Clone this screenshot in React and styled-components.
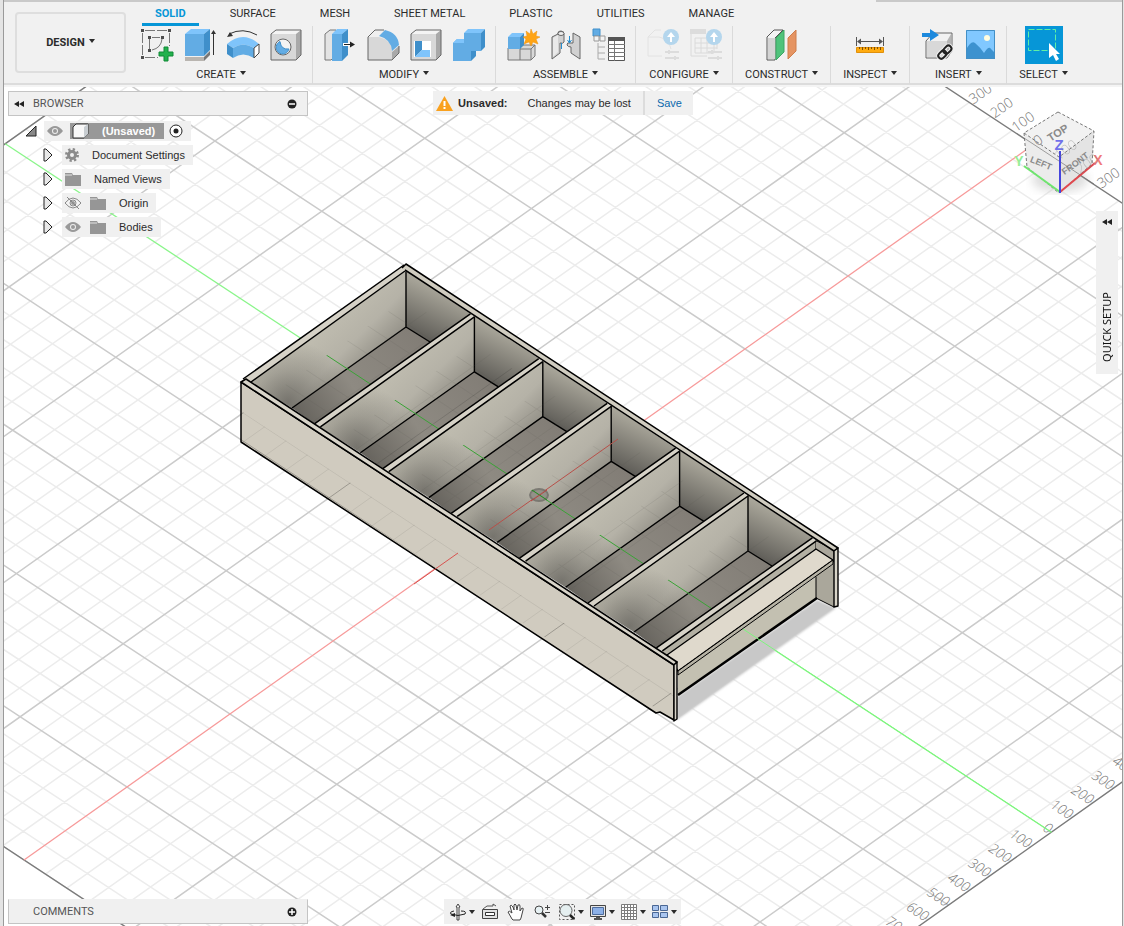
import React from "react";
import styled, { createGlobalStyle, css } from "styled-components";

const GlobalStyle = createGlobalStyle`
  * {
    box-sizing: border-box;
  }
  body {
    margin: 0;
    background: #f0f0f0;
    color: #2b2b2b;
    font-family: Roboto, "Liberation Sans", sans-serif;
    font-size: 11px;
  }
  button {
    font: inherit;
    color: inherit;
    background: none;
    border: 0;
    padding: 0;
    cursor: pointer;
  }
`;

const DARK = "#555";
const BLUE = "#62ace4";
const BLUE_TOP = "#7fc4fb";
const BLUE_SIDE = "#3f8fca";

/* ---------- toolbar icons, all on a 32 x 32 board ---------- */

const SketchIcon = () => (
  <>
    <path d="M4 1.500H26M1.500 4V26M28.500 4V17M4 28.500H17" stroke="#777" strokeDasharray="10 2" fill="none" />
    <path d="M8.500 10V20M11 8.500H19M21 10Q20 19 11 21" stroke="#777" fill="none" />
    <path d="M0 0h3v3h-3zM27 0h3v3h-3zM0 27h3v3h-3zM7 7h3v3h-3zM20 7h3v3h-3zM7 20h3v3h-3z" fill="#4d4d4d" />
    <path d="M23 18h4v5h5v4h-5v5h-4v-5h-5v-4h5z" fill="#23b14d" stroke="#118a36" />
  </>
);

const ExtrudeIcon = () => (
  <>
    <path d="M1 28H20V32H1z" fill="#b9b5b0" />
    <path d="M20 28L26 22V26L20 32z" fill="#777" />
    <path d="M1 5L7 0H26L20 5z" fill={BLUE_TOP} />
    <path d="M1 5H20V27H1z" fill={BLUE} />
    <path d="M20 5L26 0V21L20 27z" fill={BLUE_SIDE} />
    <path d="M29.500 3V26" stroke="#333" />
    <path d="M29.500 1l2.500 4h-5z" fill="#333" />
  </>
);

const RevolveIcon = () => (
  <>
    <path d="M2 5Q16-2 30 6" stroke="#333" fill="none" />
    <path d="M0 8l3-5 3 4z" fill="#333" />
    <path d="M0 15Q16 1 32 15L27 19Q16 12 6 19z" fill={BLUE_TOP} />
    <path d="M6 19Q16 12 27 19V29Q16 22 6 29z" fill={BLUE} />
    <path d="M0 15L6 19V29L0 25z" fill={BLUE_SIDE} />
    <path d="M27 19L32 15V24L27 29z" fill="#fff" stroke="#444" />
  </>
);

const Box = () => (
  <>
    <path d="M1 5L6 1H31V26L26 31H1z" fill="#f4f4f4" />
    <path d="M26 5L31 1V26L26 31z" fill="#a9a9a9" />
    <path d="M1 5H26V31H1z" fill="#d8d8d8" />
    <path d="M1 5L6 1H31V26L26 31H1z" fill="none" stroke="#666" />
  </>
);

const HoleIcon = () => (
  <>
    <Box />
    <circle cx="13" cy="18" r="8" fill="#f3f3f3" stroke="#666" />
    <path d="M10 12.500A6.500 6.500 0 1 0 19 20Q11 21 10 12.500z" fill={BLUE} stroke={BLUE_SIDE} />
  </>
);

const PressPullIcon = () => (
  <>
    <path d="M1 5L6 1H12V26L7 31H1z" fill="#e3e3e3" stroke="#777" />
    <path d="M8 5L13 0H24L18 5z" fill={BLUE_TOP} />
    <path d="M8 5H18V32H8z" fill={BLUE} />
    <path d="M18 5L24 0V26L18 32z" fill={BLUE_SIDE} />
    <path d="M19 15.500H28" stroke="#fff" strokeWidth="3" />
    <path d="M20 15.500H28" stroke="#222" />
    <path d="M26 12.500l5 3-5 3z" fill="#222" />
  </>
);

const FilletIcon = () => (
  <>
    <path d="M1 8L8 1H17L32 16V24L25 31H1z" fill="#efefef" />
    <path d="M1 8H12Q25 11 25 23V31H1z" fill="#d8d8d8" />
    <path d="M25 23L32 17V24L25 31z" fill="#a9a9a9" />
    <path d="M12 7L18 1Q31 4 32 16L25 22Q24 10 12 7z" fill={BLUE} />
    <path d="M17 1H8L1 8V31H25L32 24V17" fill="none" stroke="#666" />
  </>
);

const ShellIcon = () => (
  <>
    <Box />
    <path d="M4 12H21V28H4z" fill="#fff" />
    <path d="M5 12H12V21L5 28z" fill={BLUE_SIDE} />
    <path d="M12 21H20V28H5z" fill={BLUE_TOP} />
  </>
);

const CombineIcon = () => (
  <>
    <path d="M11 4L15 0H32L28 4z" fill={BLUE_TOP} />
    <path d="M28 4L32 0V18L28 22H23V27L18 32V22z" fill={BLUE_SIDE} />
    <path d="M0 14L4 10H11V4H28V22H18V32H0z" fill={BLUE} />
    <path d="M0 14L4 10H11V14z" fill={BLUE_TOP} />
  </>
);

const ComponentIcon = () => (
  <>
    <path d="M1 19L13 19 16 16H28V27L24 31H1z" fill="#d8d8d8" stroke="#777" />
    <path d="M13 19V31M13 20H24L28 16M24 20V31" fill="none" stroke="#777" />
    <path d="M1 8L5 4H17L13 8z" fill={BLUE_TOP} />
    <path d="M1 8H13V20H1z" fill={BLUE} />
    <path d="M13 8L17 4V16L13 20z" fill={BLUE_SIDE} />
    <path
      d="M24 0l2 5 4-3-1 5 4 1-4 2 2 5-5-2-2 4-2-4-5 2 2-5-3-2 4-1-1-5 4 3z"
      fill="#ffa414"
      stroke="#ea9110"
      strokeWidth="0.500"
    />
  </>
);

const JointIcon = () => (
  <>
    <path d="M2 8L8 5V4Q8 2 11 2Q14 2 14 5V13Q13 15 10 14V24L2 30z" fill="#d1d1d1" stroke="#666" />
    <path d="M30 8L23 4V14H20Q17 13 17 16Q18 18 21 18V24L30 30z" fill="#d1d1d1" stroke="#666" />
    <path d="M3 9L8 6V23L3 28z" fill="#e9e9e9" />
    <ellipse cx="11" cy="4.500" rx="3" ry="2" fill="#eee" stroke="#666" />
    <path d="M11.500 14V20M19.500 7V14" stroke="#268ed0" />
    <path d="M17.500 11l2 3 2-3" stroke="#268ed0" fill="none" />
  </>
);

const BomIcon = () => (
  <>
    <path d="M0 0H7V7H0z" fill={BLUE} stroke={BLUE_SIDE} />
    <path d="M1 7H6V12H1zM7 7H12V12H7z" fill="#f4f4f4" stroke="#999" />
    <path d="M5 14V30M5 18H12M5 24H12M5 30H12" fill="none" stroke="#aaa" />
    <path d="M15.500 8.500H31.500V31.500H15.500z" fill="#fff" stroke={DARK} />
    <path d="M15 8H32V12H15z" fill={DARK} />
    <path d="M15 15.500H32M15 19.500H32M15 23.500H32M15 27.500H32M21.500 12V32" stroke="#777" />
  </>
);

const ConfigBadge = () => (
  <>
    <path d="M18 23H32M18 29H32M22 21V25M28 27V31" stroke="#dcdcdc" strokeWidth="2" />
    <circle cx="24" cy="8" r="8" fill="#b4d6ed" />
    <path d="M24 3l4 5h-3v5h-2V8h-3z" fill="#fff" />
  </>
);

const ConfigPartIcon = () => (
  <>
    <path d="M14 1H8L1 8V27H15M1 8H12Q22 10 24 20" fill="none" stroke="#e2e2e2" />
    <ConfigBadge />
  </>
);

const ConfigTableIcon = () => (
  <>
    <path d="M0 0H16V5H0z" fill="#dcdcdc" />
    <path d="M1 5V27H17M5 9H24V24H5zM5 14H27M5 19H27M11 9V24M17 9V24M27 14V20" fill="none" stroke="#dadada" />
    <ConfigBadge />
  </>
);

const PlaneIcon = () => (
  <>
    <path d="M1 8L8 1H17L9 9V31H1z" fill="#f4f4f4" stroke={DARK} />
    <path d="M2 9H9V30H2z" fill="#d4d4d4" />
    <path d="M10 9L18 1V23L10 31z" fill="#4fc37b" stroke="#3da765" />
    <path d="M22 9L30 1V22L22 30z" fill="#e59462" stroke="#cf7e4c" />
  </>
);

const MeasureIcon = () => (
  <>
    <path d="M2.500 8V17M29.500 8V17M4 12.500H28" stroke={DARK} />
    <path d="M3 12.500l4-3v6zM29 12.500l-4-3v6z" fill={DARK} />
    <path d="M2.500 18.500H29.500V23.500H2.500z" fill="#ffab0f" stroke="#e0900c" />
    <path d="M5.500 18v2M8.500 18v3M11.500 18v2M14.500 18v3M17.500 18v2M20.500 18v3M23.500 18v2M26.500 18v3" stroke="#805000" />
  </>
);

const ChainLink = () => (
  <>
    <rect x="17" y="23" width="9" height="6" rx="3" transform="rotate(-45 21 26)" />
    <rect x="22" y="18" width="9" height="6" rx="3" transform="rotate(-45 26 21)" />
  </>
);

const InsertIcon = () => (
  <>
    <path d="M5 12L12 4H31V22L26 29H5z" fill="#f2f2f2" stroke="#666" />
    <path d="M6 12H26V28H6z" fill="#d8d8d8" />
    <path d="M26 12L30 5V22L26 28z" fill="#b5b5b5" />
    <path d="M1 4H9V0L18 6L9 12V8H1z" fill="#1d89dd" />
    <g fill="none" stroke="#f2f2f2" strokeWidth="4">
      <ChainLink />
    </g>
    <g fill="none" stroke="#222" strokeWidth="2">
      <ChainLink />
    </g>
  </>
);

const PictureIcon = () => (
  <>
    <path d="M2 1H31V30H2z" fill="#81c8ff" />
    <circle cx="23" cy="9" r="3" fill="#fffde0" />
    <path d="M2 21Q7 11 11 14Q17 19 20 24Q25 16 27 20L31 24V30H2z" fill="#3d92cf" />
    <path d="M2.500 1.500H30.500V29.500H2.500z" fill="none" stroke="#438fc5" />
  </>
);

const SelectIcon = () => (
  <>
    <path d="M0.500 0.500H27.500V21.500H0.500z" fill="none" stroke="#5ff0a5" strokeDasharray="6 2" />
    <path d="M21 14V29L25 26L28 32L31 30L28 25H32z" fill="#fff" />
  </>
);

/* ---------- layout pieces ---------- */

const Page = styled.div`
  display: flex;
  flex-direction: column;
  min-height: 100vh;
  padding: 0 1px 0 3px;
  background: #e4e4e4;
`;

const Frame = styled.div`
  flex: 1;
  display: flex;
  flex-direction: column;
  border: solid #9a9a9a;
  border-width: 0 1px;
`;

const TopStrip = styled.div`
  display: flex;
  justify-content: space-between;
  height: 2px;
  background: #f1f1f1;
  &::before,
  &::after {
    content: "";
    width: 22%;
    background: #c9c9c9;
  }
`;

const Toolbar = styled.header`
  display: flex;
  height: 85px;
  padding: 10px 11px 0;
  gap: 4px;
  background: linear-gradient(#f1f1f1 0 81px, #dcdcdc 81px 83px, #f4f4f4 83px);
`;

const WorkspaceButton = styled.button`
  width: 111px;
  height: 61px;
  border: 2px solid #dedede;
  border-radius: 4px;
  font-weight: 700;
`;

const Caret = styled.span`
  display: inline-block;
  margin-left: 4px;
  border: solid transparent;
  border-width: 4px 3px 0;
  border-top-color: #2b2b2b;
  vertical-align: 3px;
`;

const ToolArea = styled.div`
  flex: 1;
  min-width: 0;
`;

const Tabs = styled.nav`
  display: flex;
  gap: 18px;
  padding-left: 12px;
  margin-top: -6px;
`;

const Tab = styled.button`
  height: 20px;
  padding: 0 13px 2px;
  line-height: 16px;
  white-space: nowrap;
  border-bottom: 3px solid transparent;
  ${({ $active }) =>
    $active &&
    css`
      color: #0696d7;
      font-weight: 700;
      border-bottom-color: #0696d7;
    `}
`;

const Groups = styled.div`
  display: flex;
`;

const Group = styled.section`
  display: flex;
  flex-direction: column;
  align-items: center;
  padding: 0 5px;
  border-right: 1px solid #dadada;
  &:last-child {
    border: 0;
  }
`;

const Tools = styled.div`
  display: flex;
`;

const ToolButton = styled.button`
  display: grid;
  place-items: center;
  width: ${({ $selected }) => ($selected ? 38 : 43)}px;
  height: 38px;
  background: ${({ $selected }) => ($selected ? "#0696d7" : "none")};
`;

const GroupLabel = styled.button`
  height: 20px;
  padding: 0 7px;
  white-space: nowrap;
`;

const Viewport = styled.main`
  position: relative;
  flex: 1;
  display: grid;
  grid-template-columns: 1fr auto 1fr;
  grid-template-rows: 1fr auto;
  padding: 4px 4px 2px;
  background: #fff;
  overflow: hidden;
`;

const Canvas = styled.svg`
  position: absolute;
  inset: 0;
  width: 100%;
  height: 100%;
`;

const BrowserColumn = styled.aside`
  position: relative;
  width: 300px;
`;

const PanelBar = styled.div`
  display: flex;
  align-items: center;
  width: 300px;
  height: 25px;
  padding: 0 10px 0 4px;
  background: #f0f0f0;
  border: 1px solid #c4c4c4;
  color: #555;
  span {
    flex: 1;
    padding-left: ${({ $indent }) => $indent}px;
  }
  button {
    display: flex;
  }
`;

const CommentsBar = styled(PanelBar)`
  position: relative;
  grid-row: 2;
  align-self: end;
  border-top-color: #f0f0f0;
`;

const Tree = styled.ul`
  list-style: none;
  margin: 5px 0 0;
  padding: 0 0 0 17px;
  font-family: "Liberation Sans", Arial, sans-serif;
`;

const TreeRow = styled.li`
  display: flex;
  align-items: center;
  height: 20px;
  margin-bottom: 4px;
  padding-left: ${({ $root }) => ($root ? 0 : 18)}px;
`;

const Expander = styled.button`
  display: flex;
  width: 19px;
`;

const TreeItem = styled.div`
  display: flex;
  align-items: center;
  height: 20px;
  padding: 0 8px 0 3px;
  gap: 9px;
  background: #f0f0f0;
  svg {
    display: block;
  }
`;

const TreeName = styled.span`
  padding-left: 4px;
`;

const RootName = styled.div`
  display: flex;
  align-items: center;
  gap: 13px;
  height: 16px;
  padding: 0 9px 0 2px;
  margin: 0 -4px 0 -2px;
  background: #989898;
  color: #fff;
  font-weight: 700;
`;

const Notice = styled.div`
  position: relative;
  display: flex;
  align-items: center;
  height: 24px;
  padding-left: 3px;
  background: #f0f0f0;
  font-family: "Liberation Sans", Arial, sans-serif;
  strong {
    padding: 0 20px 0 5px;
  }
  span {
    padding-right: 12px;
  }
  a {
    padding: 0 11px 0 12px;
    line-height: 24px;
    border-left: 2px solid #dcdcdc;
    color: #0b69ad;
    text-decoration: none;
  }
`;

const QuickSetup = styled.button`
  position: relative;
  justify-self: end;
  display: flex;
  flex-direction: column;
  align-items: center;
  justify-content: space-between;
  width: 22px;
  height: 163px;
  margin-top: 120px;
  padding: 6px 0 12px;
  background: #f0f0f0;
  color: #111;
  span {
    writing-mode: vertical-rl;
    transform: rotate(180deg);
    font-family: "Noto Sans", sans-serif;
    line-height: 16px;
  }
`;

const NavBar = styled.div`
  position: relative;
  grid-area: 2 / 2;
  display: flex;
  align-items: center;
  justify-self: center;
  height: 25px;
  padding: 0 2px;
  background: #f0f0f0;
`;

const NavButton = styled.button`
  display: flex;
  align-items: center;
  justify-content: center;
  width: ${({ $menu }) => ($menu ? 31 : 26)}px;
  height: 24px;
  ${Caret} {
    margin-left: 2px;
  }
`;

/* ---------- small icons ---------- */

const Rewind = () => (
  <svg width="12" height="10" viewBox="0 0 12 10">
    <path d="M6 2v6L1 5zM11 2v6L6 5z" fill="#222" />
  </svg>
);

const RoundIcon = ({ plus }) => (
  <svg width="10" height="10" viewBox="0 0 10 10">
    <circle cx="5" cy="5" r="4.500" fill="#222" />
    <path d={plus ? "M2 5H8M5 2V8" : "M2 5H8"} stroke="#fff" strokeWidth="1.500" />
  </svg>
);

const Eye = ({ off }) => (
  <svg width="16" height="12" viewBox="0 0 16 12">
    <path d="M0 6Q8-4 16 6Q8 16 0 6z" fill={off ? "#f4f4f4" : "#999"} stroke={off ? "#888" : "none"} />
    <circle cx="8" cy="6" r="3" fill={off ? "none" : "#eee"} stroke={off ? "#888" : "none"} />
    <circle cx="8" cy="6" r="2" fill="#999" />
    {off && <path d="M2 0L14 12" stroke="#888" />}
  </svg>
);

const Folder = () => (
  <svg width="16" height="14" viewBox="0 0 16 14">
    <path d="M0 1H7L8 3H16V14H0z" fill="#969696" />
    <path d="M0 3H7" stroke="#e4e4e4" />
  </svg>
);

const Gear = () => (
  <svg width="14" height="14" viewBox="0 0 14 14">
    <circle cx="7" cy="7" r="5.500" fill="none" stroke="#8b8b8b" strokeWidth="3" strokeDasharray="2.160 2.160" />
    <circle cx="7" cy="7" r="3.500" fill="none" stroke="#8b8b8b" strokeWidth="3" />
  </svg>
);

const Triangle = () => (
  <svg width="10" height="14" viewBox="0 0 10 14">
    <path d="M1 1H3L9 7L3 13H1z" fill="#e8e8e8" stroke="#222" />
  </svg>
);

/* ---------- model canvas ---------- */

// one major grid square (500 mm) along each ground axis
const O = [539, 495];
const U = [103, -73];
const V = [106.75, 70.25];
const LOW = -5;
const HIGH = 4.8;

const at = (a, b) => [O[0] + a * U[0] + b * V[0], O[1] + a * U[1] + b * V[1]];
const seg = (p, q) => `M${p[0]} ${p[1]}L${q[0]} ${q[1]}`;

const minor = [];
const major = [];
for (let i = -25; i <= 24; i++) {
  if (i === 0) continue;
  const t = i / 5;
  (i % 5 ? minor : major).push(seg(at(t, LOW), at(t, HIGH)), seg(at(LOW, t), at(HIGH, t)));
}
const MINOR = minor.join("");
const MAJOR = major.join("");
const EDGE = `M${at(LOW, LOW)}L${at(HIGH, LOW)}L${at(HIGH, HIGH)}L${at(LOW, HIGH)}z`;

const CELL_STEP = [68.4, 44.8];
const cells = [0, 1, 2, 3, 4, 5];

const GridLines = () => (
  <g fill="none" strokeWidth="1.500">
    <path d={MINOR} stroke="#ececec" />
    <path d={MAJOR} stroke="#cbcbcb" />
  </g>
);

const rulerFont = {
  fill: "#777",
  fontFamily: "Open Sans, sans-serif",
  fontSize: 14,
  fontWeight: 300,
};

const LowerRuler = () => (
  <g {...rulerFont} fontStyle="italic" textAnchor="end">
    {[-7, -6, -5, -4, -3, -2, -1, 0, 1, 2, 3, 4].map((n) => {
      const [x, y] = at(n / 5, HIGH);
      return (
        <text key={n} transform={`translate(${x - 3} ${y + 2}) rotate(33)`}>
          {Math.abs(n * 100)}
        </text>
      );
    })}
  </g>
);

const UpperRuler = () => (
  <g {...rulerFont}>
    {[-3, -2, -1, 0, 1, 2, 3].map((n) => {
      const [x, y] = at(HIGH, n / 5);
      return (
        <text key={n} opacity={n === 1 || n === 2 ? 0.4 : 1} transform={`translate(${x + 4} ${y + 2}) rotate(-35)`}>
          {Math.abs(n * 100)}
        </text>
      );
    })}
  </g>
);

const Cell = ({ k }) => (
  <g transform={`translate(${k * CELL_STEP[0]} ${k * CELL_STEP[1]})`}>
    <path d="M251 382L406 271V327L292 408z" fill="url(#wall)" />
    <path d="M251 382L406 271V327L292 408z" fill="url(#wallCorner)" />
    <path d="M406 271L471 314L430 342L406 327z" fill="url(#back)" />
    <path d="M406 327L430 342L315 424L292 408z" fill="url(#floor)" />
    <path d="M406 271V327M292 408L406 327L430 342" fill="none" stroke="#000" strokeWidth="1.400" />
  </g>
);

const Divider = ({ k }) => (
  <g transform={`translate(${k * CELL_STEP[0]} ${k * CELL_STEP[1]})`}>
    <path d="M246 379L402 269L406 272L252 382z" fill="#d6d2c7" />
    <path d="M246 379L402 269M252 382L406 272" stroke="#000" strokeWidth="1.500" />
  </g>
);

const Drawer = () => (
  <g strokeLinejoin="round">
    <path d="M677 697L817 600L836 608L677 720z" fill="#c8c8c8" filter="url(#soft)" />
    <path d="M678 674L816 577V599L678 696z" fill="#c3c0b1" />
    <path d="M816 574L834 564V607L816 598z" fill="#aaa79b" />
    <path d="M816 577V598L834 607" fill="none" stroke="#000" />
    <path d="M678 695L817 598" stroke="#000" strokeWidth="2.500" />
    <path d="M815 540L834 550V562L815 550z" fill="#aaa69b" stroke="#000" />
    <path d="M661 651L815 541V549L667 656z" fill="#b3b0a3" />
    <path d="M667 655L816 549L833 560L678 671z" fill="#dfd9cc" stroke="#000" strokeWidth="1.400" />
    <path d="M678 671L833 560V564L678 675z" fill="#b7b3a5" stroke="#000" />

    {cells.map((k) => (
      <Cell key={k} k={k} />
    ))}
    <g clipPath="url(#inside)">
      <path d={MINOR} stroke="#5a5852" opacity="0.120" />
      <path d={MAJOR} stroke="#3a3936" opacity="0.220" />
      <path d={seg(at(0, LOW), at(0, HIGH))} stroke="#3aa336" />
    </g>
    {[1, 2, 3, 4, 5, 6].map((k) => (
      <Divider key={k} k={k} />
    ))}
    <path d={seg([489, 530], [618, 439])} stroke="#b84f48" />
    <ellipse cx="539" cy="495" rx="9" ry="6" fill="#8c8a82" stroke="#6e6c66" strokeWidth="2" opacity="0.800" />
    <path d="M532 490L547 500" stroke="#238c20" />
    <path d="M531 501L547 490" stroke="#b6443f" />

    <path d="M241 381L404 265L408 269L250 383z" fill="#d6d2c7" />
    <path d="M243 379L404 265M251 382L405 271" stroke="#000" strokeWidth="1.500" />
    <path d="M402 268L406 264L838 548L834 551L405 271z" fill="#d0ccc0" />
    <path d="M402 268L406 264L838 548L834 551M405 270L834 551" fill="none" stroke="#000" strokeWidth="1.500" />
    <path d="M834 551L838 548V606L834 607z" fill="#d8d4c8" stroke="#000" strokeWidth="1.400" />

    <path d="M241 382L674 665V720L660 712L656 713L241 442z" fill="#d0cbbf" stroke="#000" strokeWidth="1.500" />
    <g clipPath="url(#front)" fill="none" stroke="#000">
      <path d={MINOR} opacity="0.070" />
      <path d={MAJOR} opacity="0.250" />
    </g>
    <path d={seg([414, 584], [458, 553])} stroke="#d9534f" />
    <path d="M241 382L246 379L677 662L674 665z" fill="#d8d4c9" stroke="#000" strokeWidth="1.500" />
    <path d="M674 665L677 662V719L674 721z" fill="#d8d4c9" stroke="#000" strokeWidth="1.400" />
  </g>
);

const ViewCube = () => (
  <g>
    <ellipse cx="1060" cy="180" rx="28" ry="12" fill="#bbb" opacity="0.500" filter="url(#blur)" />
    <path d="M1058 112L1094 131L1059 157L1024 133z" fill="#f2f2f2" />
    <path d="M1024 133L1059 157V193L1027 167z" fill="#ececec" />
    <path d="M1094 131L1059 157V193L1092 164z" fill="#e4e4e4" />
    <path
      d="M1058 112L1094 131L1092 164L1059 193L1027 167L1024 133zM1024 133L1059 157L1094 131"
      fill="none"
      stroke="#777"
      strokeDasharray="3 2"
    />
    <g fill="#8a8a8a" fontFamily="Liberation Sans, sans-serif" fontSize="11" fontWeight="700" textAnchor="middle">
      <text transform="translate(1060 136) rotate(-33)">TOP</text>
      <text fontSize="9" transform="translate(1040 166) rotate(22)">LEFT</text>
      <text fontSize="9" transform="translate(1077 166) rotate(-36)">FRONT</text>
    </g>
    <path d={seg([1024, 138], [1094, 184])} stroke="#666" opacity="0.600" />
    <path d="M1060 192L1024 166" stroke="#6fe66f" strokeWidth="2" />
    <path d="M1060 192L1095 163" stroke="#e0484e" strokeWidth="2" />
    <path d="M1060 193V151" stroke="#4545dd" strokeWidth="2" />
    <g fontFamily="Liberation Sans, sans-serif" fontWeight="700" textAnchor="middle">
      <text x="1059" y="150" fontSize="15" fill="#7171ea">Z</text>
      <text x="1098" y="165" fontSize="14" fill="#f07a7a">X</text>
      <text x="1019" y="166" fontSize="14" fill="#96ee96">Y</text>
    </g>
  </g>
);

const Scene = () => (
  <Canvas viewBox="4 87 1118 839" preserveAspectRatio="xMidYMid slice" aria-label="Model view">
    <defs>
      <linearGradient id="wall" gradientUnits="userSpaceOnUse" x1="312" y1="330" x2="356" y2="374">
        <stop offset="0" stopColor="#c1beb1" />
        <stop offset="0.600" stopColor="#b5b2a7" />
        <stop offset="1" stopColor="#98958c" />
      </linearGradient>
      <radialGradient id="wallCorner" gradientUnits="userSpaceOnUse" cx="288" cy="402" r="62">
        <stop offset="0" stopColor="#4f4d49" stopOpacity="0.620" />
        <stop offset="0.500" stopColor="#4f4d49" stopOpacity="0.260" />
        <stop offset="1" stopColor="#4f4d49" stopOpacity="0" />
      </radialGradient>
      <linearGradient id="back" gradientUnits="userSpaceOnUse" x1="440" y1="290" x2="418" y2="336">
        <stop offset="0" stopColor="#a9a69a" />
        <stop offset="1" stopColor="#5e5c57" />
      </linearGradient>
      <linearGradient id="floor" gradientUnits="userSpaceOnUse" x1="425" y1="330" x2="300" y2="418">
        <stop offset="0" stopColor="#817c75" />
        <stop offset="0.600" stopColor="#8e8a82" />
        <stop offset="1" stopColor="#66635d" />
      </linearGradient>
      <clipPath id="inside">
        {cells.map((k) => (
          <path
            key={k}
            d="M271 395L406 299L450 328L315 424L292 408z"
            transform={`translate(${k * CELL_STEP[0]} ${k * CELL_STEP[1]})`}
          />
        ))}
      </clipPath>
      <clipPath id="front">
        <path d="M241 411L674 695V720L241 442z" />
      </clipPath>
      <filter id="soft">
        <feGaussianBlur stdDeviation="1" />
      </filter>
      <filter id="blur">
        <feGaussianBlur stdDeviation="5" />
      </filter>
    </defs>
    <GridLines />
    <path d={EDGE} fill="none" stroke="#7a7a7a" strokeWidth="1.300" />
    <LowerRuler />
    <path d={seg(at(LOW, 0), at(HIGH, 0))} stroke="#f79a9a" strokeWidth="1.300" />
    <path d={seg(at(0, LOW), at(0, HIGH))} stroke="#8af58a" strokeWidth="1.300" />
    <Drawer />
    <path d={seg([743, 629], at(0, HIGH))} stroke="#7df57d" />
    <ViewCube />
    <UpperRuler />
  </Canvas>
);

/* ---------- navigation bar icons, 18 x 18 ---------- */

const navItems = [
  {
    name: "Orbit",
    menu: true,
    icon: (
      <>
        <path d="M9 1l2 3h-1v13h-2V4H7z" fill="#f4f4f4" stroke="#444" />
        <path d="M5 8Q0 9 2 11Q9 14 16 11Q18 8 12 8" fill="none" stroke="#222" />
        <path d="M1 12l5-2v4z" fill="#222" />
      </>
    ),
  },
  {
    name: "Look at",
    icon: (
      <>
        <path d="M1.500 6.500H16.500V15.500H1.500z" fill="#e2e2e2" stroke="#444" />
        <path d="M4.500 9.500H13.500V12.500H4.500z" fill="#fff" stroke="#333" />
        <path d="M2 6L6 3H12V1L15 3" fill="none" stroke="#555" />
      </>
    ),
  },
  {
    name: "Pan",
    icon: (
      <path
        d="M5 16L1 9Q2 7 5 10L3 3Q4 1 6 4L7 7V2Q8 0 9 2L10 7L11 2Q13 1 13 3L13 8L15 5Q17 5 16 7L14 15L13 17H6z"
        fill="#fff"
        stroke="#444"
      />
    ),
  },
  {
    name: "Zoom",
    icon: (
      <>
        <circle cx="6" cy="7" r="4" fill="#e7f1f3" stroke="#444" />
        <path d="M9 10L13 14" stroke="#333" strokeWidth="2.500" />
        <path d="M12 4.500H17M14.500 2V7M12 9.500H17" stroke="#444" />
      </>
    ),
  },
  {
    name: "Fit",
    menu: true,
    icon: (
      <>
        <path d="M1.500 1.500H16.500V16.500H1.500z" fill="none" stroke="#555" strokeDasharray="2 2" />
        <circle cx="8" cy="7.500" r="6" fill="#e5eff0" stroke="#666" />
        <path d="M12 12L16 16" stroke="#222" strokeWidth="2.500" />
      </>
    ),
  },
  {
    name: "Display settings",
    menu: true,
    icon: (
      <>
        <path d="M1.500 2.500H16.500V13.500H1.500z" fill="#e4e4e4" stroke="#444" />
        <path d="M3.500 4.500H14.500V11.500H3.500z" fill="#8db1e8" stroke="#4e6d9e" />
        <path d="M7 14H11V15H13V17H5V15H7z" fill="#555" />
      </>
    ),
  },
  {
    name: "Grid and snaps",
    menu: true,
    icon: (
      <path
        d="M1.500 1.500H16.500V16.500H1.500zM4.500 1V17M7.500 1V17M10.500 1V17M13.500 1V17M1 4.500H17M1 7.500H17M1 10.500H17M1 13.500H17"
        fill="#fff"
        stroke="#7d7d7d"
      />
    ),
  },
  {
    name: "Viewports",
    menu: true,
    icon: (
      <path
        d="M1.500 2.500H7.500V7.500H1.500zM9.500 2.500H16.500V7.500H9.500zM1.500 9.500H7.500V14.500H1.500zM9.500 9.500H16.500V14.500H9.500z"
        fill="#a9c5ef"
        stroke="#4a6794"
      />
    ),
  },
];

const groups = [
  { name: "CREATE", tools: [["Sketch", SketchIcon], ["Extrude", ExtrudeIcon], ["Revolve", RevolveIcon], ["Hole", HoleIcon]] },
  { name: "MODIFY", tools: [["Press pull", PressPullIcon], ["Fillet", FilletIcon], ["Shell", ShellIcon], ["Combine", CombineIcon]] },
  { name: "ASSEMBLE", tools: [["Component", ComponentIcon], ["Joint", JointIcon], ["Parts", BomIcon]] },
  { name: "CONFIGURE", tools: [["Configure part", ConfigPartIcon], ["Configure table", ConfigTableIcon]] },
  { name: "CONSTRUCT", tools: [["Plane", PlaneIcon]] },
  { name: "INSPECT", tools: [["Measure", MeasureIcon]] },
  { name: "INSERT", tools: [["Derive", InsertIcon], ["Canvas", PictureIcon]] },
  { name: "SELECT", tools: [["Select", SelectIcon]], selected: true },
];

const tabs = ["SOLID", "SURFACE", "MESH", "SHEET METAL", "PLASTIC", "UTILITIES", "MANAGE"];

const nodes = [
  { name: "Document Settings", icons: <Gear /> },
  { name: "Named Views", icons: <Folder /> },
  { name: "Origin", icons: <><Eye off /><Folder /></> },
  { name: "Bodies", icons: <><Eye /><Folder /></> },
];

const App = () => (
  <Page>
    <GlobalStyle />
    <Frame>
      <TopStrip />
      <Toolbar>
        <WorkspaceButton>
          DESIGN
          <Caret />
        </WorkspaceButton>
        <ToolArea>
          <Tabs>
            {tabs.map((tab) => (
              <Tab key={tab} $active={tab === "SOLID"}>
                {tab}
              </Tab>
            ))}
          </Tabs>
          <Groups>
            {groups.map((group) => (
              <Group key={group.name}>
                <Tools>
                  {group.tools.map(([name, Icon]) => (
                    <ToolButton key={name} aria-label={name} $selected={group.selected}>
                      <svg width="32" height="32" viewBox="0 0 32 32" overflow="visible">
                        <Icon />
                      </svg>
                    </ToolButton>
                  ))}
                </Tools>
                <GroupLabel>
                  {group.name}
                  <Caret />
                </GroupLabel>
              </Group>
            ))}
          </Groups>
        </ToolArea>
      </Toolbar>

      <Viewport>
        <Scene />
        <BrowserColumn>
          <PanelBar $indent={8}>
            <button aria-label="Collapse browser">
              <Rewind />
            </button>
            <span>BROWSER</span>
            <button aria-label="Hide browser">
              <RoundIcon />
            </button>
          </PanelBar>
          <Tree>
            <TreeRow $root>
              <Expander aria-label="Collapse">
                <svg width="12" height="12" viewBox="0 0 12 12">
                  <path d="M11 1V11H1z" fill="#888" stroke="#222" />
                </svg>
              </Expander>
              <TreeItem>
                <Eye />
                <RootName>
                  <svg width="17" height="16" viewBox="0 0 17 16">
                    <path d="M1 4L4 1H16V11L12 15H1z" fill="#f8f8f8" stroke="#333" />
                    <path d="M12 4L16 1V11L12 15z" fill="#c9ced2" />
                  </svg>
                  (Unsaved)
                </RootName>
                <svg width="14" height="14" viewBox="0 0 14 14">
                  <circle cx="7" cy="7" r="6" fill="#fff" stroke="#222" />
                  <circle cx="7" cy="7" r="2.500" fill="#222" />
                </svg>
              </TreeItem>
            </TreeRow>
            {nodes.map((node) => (
              <TreeRow key={node.name}>
                <Expander aria-label={`Expand ${node.name}`}>
                  <Triangle />
                </Expander>
                <TreeItem>
                  {node.icons}
                  <TreeName>{node.name}</TreeName>
                </TreeItem>
              </TreeRow>
            ))}
          </Tree>
        </BrowserColumn>

        <Notice>
          <svg width="17" height="15" viewBox="0 0 17 15">
            <path d="M8.500 0L17 15H0z" fill="#f9a11f" />
            <path d="M8.500 5V10M8.500 11V13" stroke="#fff" strokeWidth="2" />
          </svg>
          <strong>Unsaved:</strong>
          <span>Changes may be lost</span>
          <a href="#save">Save</a>
        </Notice>

        <QuickSetup>
          <Rewind />
          <span>QUICK SETUP</span>
        </QuickSetup>

        <CommentsBar $indent={20}>
          <span>COMMENTS</span>
          <button aria-label="Add comment">
            <RoundIcon plus />
          </button>
        </CommentsBar>

        <NavBar>
          {navItems.map((item) => (
            <NavButton key={item.name} aria-label={item.name} $menu={item.menu}>
              <svg width="18" height="18" viewBox="0 0 18 18">
                {item.icon}
              </svg>
              {item.menu && <Caret />}
            </NavButton>
          ))}
        </NavBar>
      </Viewport>
    </Frame>
  </Page>
);

export default App;
